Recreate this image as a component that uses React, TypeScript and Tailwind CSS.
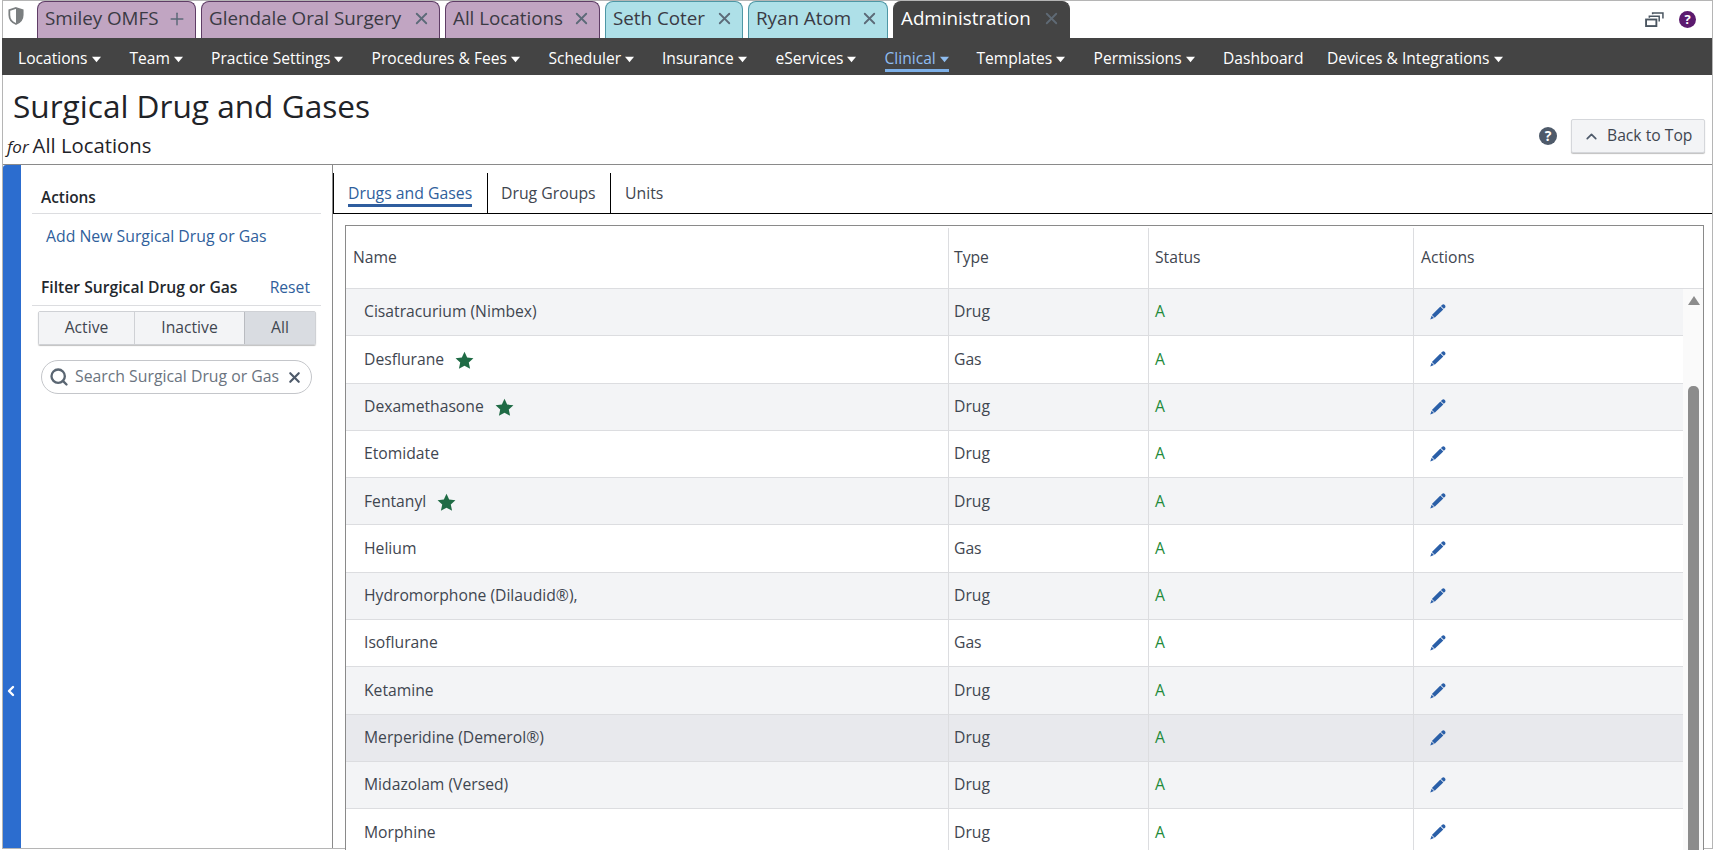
import { Plus, X, ChevronUp, ChevronLeft, Search } from 'lucide-react';

type Row = {
    name: string;
    type: string;
    star?: boolean;
    hover?: boolean;
}

const rows: Row[] = [
    { name: 'Cisatracurium (Nimbex)', type: 'Drug' },
    { name: 'Desflurane', type: 'Gas', star: true },
    { name: 'Dexamethasone', type: 'Drug', star: true },
    { name: 'Etomidate', type: 'Drug' },
    { name: 'Fentanyl', type: 'Drug', star: true },
    { name: 'Helium', type: 'Gas' },
    { name: 'Hydromorphone (Dilaudid®),', type: 'Drug' },
    { name: 'Isoflurane', type: 'Gas' },
    { name: 'Ketamine', type: 'Drug' },
    { name: 'Merperidine (Demerol®)', type: 'Drug', hover: true },
    { name: 'Midazolam (Versed)', type: 'Drug' },
    { name: 'Morphine', type: 'Drug' },
];

const navItems = [
    { label: 'Locations', caret: true, cls: 'w-[111.5px]' },
    { label: 'Team', caret: true, cls: 'w-[81.5px]' },
    { label: 'Practice Settings', caret: true, cls: 'w-[160.5px]' },
    { label: 'Procedures & Fees', caret: true, cls: 'w-[177px]' },
    { label: 'Scheduler', caret: true, cls: 'w-[113.5px]' },
    { label: 'Insurance', caret: true, cls: 'w-[113.5px]' },
    { label: 'eServices', caret: true, cls: 'w-[109px]' },
    { label: 'Clinical', caret: true, active: true, cls: 'w-[92px]' },
    { label: 'Templates', caret: true, cls: 'w-[117px]' },
    { label: 'Permissions', caret: true, cls: 'w-[129.5px]' },
    { label: 'Dashboard', cls: 'w-[104px]' },
    { label: 'Devices & Integrations', caret: true, cls: 'w-[200px]' },
];

function Pencil() {
    return (
        <svg viewBox="0 0 16 16" className="w-4 h-4 text-[#2a5fa8]" fill="currentColor">
            <path d="M12 0.9 C12.8 0.1 13.9 0.1 14.8 0.9 C15.7 1.8 15.7 2.9 15 3.7 L13.8 4.8 L10.9 1.9 Z" />
            <path d="M10.4 2.5 L13.3 5.4 L4.7 13.7 L1.9 11 Z" />
            <path d="M1.6 11.7 L4 14.1 L0.3 15.6 Z" />
        </svg>
    );
}

function Star() {
    return (
        <svg viewBox="0 0 20 20" className="w-[19px] h-[19px] ml-[11px] mt-[2px] text-[#1f6b45]" fill="currentColor">
            <path d="M10 0.8 L12.8 6.9 L19.4 7.6 L14.5 12.1 L15.9 18.7 L10 15.4 L4.1 18.7 L5.5 12.1 L0.6 7.6 L7.2 6.9 Z" />
        </svg>
    );
}

function Caret({ color }: { color: string }) {
    return (
        <svg viewBox="0 0 8 6" className={`w-[9px] h-[7px] ml-[4px] mt-[2px] ${color}`} fill="currentColor">
            <path d="M0 0.5 H8 L4 5.5 Z" />
        </svg>
    );
}

function Tab({ label, w, kind, plus }: { label: string; w: string; kind: 'purple' | 'teal' | 'dark'; plus?: boolean }) {
    const colors = kind === 'purple'
        ? 'bg-[#c1a5c2] border-[#5f3d66] text-[#3a3a44]'
        : kind === 'teal'
            ? 'bg-[#aee0e8] border-[#4e97a5] text-[#3a3a44]'
            : 'bg-[#444444] border-[#444444] text-white';
    const iconColor = kind === 'dark' ? 'text-[#5f6a75]' : 'text-[#5c6a78]';
    return (
        <div className={`flex items-center justify-between h-[37px] pl-[7px] pr-[8px] pb-[3px] rounded-t-[8px] border border-b-0 ${w} ${colors}`}>
            <span className="text-[18.8px] leading-none whitespace-nowrap">{label}</span>
            {plus
                ? <Plus size={20} strokeWidth={1.8} className={iconColor} />
                : <X size={19} strokeWidth={2.3} className={iconColor} />}
        </div>
    );
}

export default function App() {
    return (
        <div className="h-[850px] w-[1714px] overflow-hidden bg-white font-['Open_Sans',sans-serif] text-[#3f4650]">
            <div className="h-[849px] ml-[2px] mr-[1px] border-l border-r border-t border-b border-[#b5b5b5] flex flex-col">
                {/* Tabs */}
                <div className="flex items-end h-[37px] shrink-0 relative">
                    <svg viewBox="0 0 18 20" className="absolute left-[5px] top-[6px] w-[16px] h-[18px]">
                        <path d="M9 1 L16.5 3.5 V9 C16.5 14 13 17.5 9 19 C5 17.5 1.5 14 1.5 9 V3.5 Z" fill="none" stroke="#7b7f80" strokeWidth="2" />
                        <path d="M9 1 L16.5 3.5 V9 C16.5 14 13 17.5 9 19 Z" fill="#7b7f80" />
                    </svg>
                    <div className="flex gap-[5px] ml-[34px]">
                        <Tab label="Smiley OMFS" w="w-[159px]" kind="purple" plus />
                        <Tab label="Glendale Oral Surgery" w="w-[239px]" kind="purple" />
                        <Tab label="All Locations" w="w-[155px]" kind="purple" />
                        <Tab label="Seth Coter" w="w-[138px]" kind="teal" />
                        <Tab label="Ryan Atom" w="w-[140px]" kind="teal" />
                        <Tab label="Administration" w="w-[177px]" kind="dark" />
                    </div>
                    <div className="ml-auto flex items-center gap-[15px] mr-[16px] self-center">
                        <svg viewBox="0 0 20 16" className="w-[19px] h-[15px] text-[#4a5560]" fill="none" stroke="currentColor" strokeWidth="1.6">
                            <rect x="1" y="8" width="11" height="7" strokeWidth="2" />
                            <path d="M4.5 6 V4.5 H15 V10" />
                            <path d="M8 2.5 V1 H19 V7" />
                        </svg>
                        <div className="w-[17px] h-[17px] rounded-full bg-[#5b1a6e] text-white text-[13px] font-bold flex items-center justify-center leading-none">?</div>
                    </div>
                </div>

                {/* Nav */}
                <div className="flex items-center h-[37px] shrink-0 bg-[#444444] -ml-px pl-[16px] text-[15.6px] text-white">
                    {navItems.map((item) => (
                        <div key={item.label} className={`shrink-0 ${item.cls}`}>
                            <div className={`inline-flex items-center h-[23px] mt-[7px] border-b-[3px] whitespace-nowrap ${item.active ? 'border-[#7db0e8] text-[#8fbdf0]' : 'border-transparent'}`}>
                                {item.label}
                                {item.caret && <Caret color={item.active ? 'text-[#8fbdf0]' : 'text-white'} />}
                            </div>
                        </div>
                    ))}
                </div>

                {/* Title */}
                <div className="flex justify-between h-[90px] shrink-0 border-b border-[#8a8a8a] pl-[10px] pr-[7px]">
                    <div>
                        <h1 className="text-[31.6px] leading-[40px] mt-[11px] text-[#1f2328]">Surgical Drug and Gases</h1>
                        <div className="flex items-baseline mt-[7px] leading-[24px] text-[#1f2328]">
                            <span className="italic text-[17px] mr-[4px] -ml-[6px]">for</span>
                            <span className="text-[20.3px]">All Locations</span>
                        </div>
                    </div>
                    <div className="flex items-center gap-[14px] mt-[44px] self-start">
                        <div className="w-[18px] h-[18px] rounded-full bg-[#4e5a6a] text-white text-[14px] font-bold flex items-center justify-center leading-none">?</div>
                        <div className="flex items-center h-[34px] w-[134px] pl-[11px] rounded-[2px] bg-[#f3f4f6] border border-[#d5d7db] shadow-[0_1px_1px_rgba(0,0,0,0.25)] text-[15.7px] text-[#3f4650]">
                            <ChevronUp size={17} strokeWidth={2.4} className="mr-[7px] text-[#4e5a6a]" />
                            Back to Top
                        </div>
                    </div>
                </div>

                {/* Body */}
                <div className="flex flex-1 min-h-0">
                    <div className="w-[18px] shrink-0 bg-[#2c6dcf] rounded-tl-[3px] flex items-start text-white pt-[518px]">
                        <ChevronLeft size={16} strokeWidth={3.6} />
                    </div>

                    {/* Side panel */}
                    <div className="w-[312px] shrink-0 border-r border-[#8a8a8a] pl-[11px] pr-[11px]">
                        <div className="h-[49px] pt-[22px] pl-[9px] border-b border-[#dcdde0] text-[15.4px] leading-[22px] font-semibold text-[#23272d]">Actions</div>
                        <div className="pl-[14px] mt-[11px] leading-[22px] text-[15.8px] text-[#305f9c]">Add New Surgical Drug or Gas</div>
                        <div className="flex justify-between items-center mt-[25px] h-[34px] pb-[2px] pl-[9px] pr-[11px] border-b border-[#dcdde0]">
                            <span className="text-[15.7px] font-semibold text-[#23272d]">Filter Surgical Drug or Gas</span>
                            <span className="text-[15.7px] text-[#305f9c]">Reset</span>
                        </div>
                        <div className="flex h-[34px] ml-[6px] mt-[5px] w-[278px] rounded-[2px] border border-[#cfd1d5] shadow-[0_1px_1px_rgba(0,0,0,0.25)] text-[15.7px]">
                            <div className="w-[96px] flex items-center justify-center bg-[#f3f4f6] border-r border-[#cfd1d5]">Active</div>
                            <div className="w-[110px] flex items-center justify-center bg-[#f3f4f6] border-r border-[#b9bbc0]">Inactive</div>
                            <div className="flex-1 flex items-center justify-center bg-[#d9dce1]">All</div>
                        </div>
                        <div className="flex items-center h-[34px] ml-[9px] mt-[15px] w-[271px] pl-[7px] pr-[8px] rounded-full border border-[#c4c6ca] text-[15.8px] text-[#6b7480]">
                            <Search size={20} strokeWidth={2.8} className="text-[#5a6672] shrink-0" />
                            <span className="ml-[6px] whitespace-nowrap flex-1">Search Surgical Drug or Gas</span>
                            <X size={17} strokeWidth={3} className="text-[#4e5a6a] shrink-0" />
                        </div>
                    </div>

                    {/* Main */}
                    <div className="flex-1 min-w-0 pt-[8px]">
                        <div className="flex h-[41px] border-b border-black border-l text-[15.8px]">
                            <div className="w-[154px] border-r border-black pl-[14px] pt-[9px]">
                                <span className="inline-block h-[24px] leading-[21px] border-b-[3px] border-[#2f5d9e] text-[#305f9c]">Drugs and Gases</span>
                            </div>
                            <div className="w-[123px] border-r border-black pl-[13px] pt-[10px] leading-[21px]">Drug Groups</div>
                            <div className="pl-[14px] pt-[10px] leading-[21px]">Units</div>
                        </div>

                        <div className="ml-[12px] mr-[8px] mt-[11px] h-[640px] border border-[#8a8a8a] border-b-0 text-[15.7px]">
                            <div className="flex h-[63px] pt-[2px] border-b border-[#dcdde0] font-medium text-[#3f4650]">
                                <div className="w-[603px] border-r border-[#dcdde0] pl-[7px] flex items-center">Name</div>
                                <div className="w-[200px] border-r border-[#dcdde0] pl-[5px] flex items-center">Type</div>
                                <div className="w-[265px] border-r border-[#dcdde0] pl-[6px] flex items-center">Status</div>
                                <div className="flex-1 pl-[7px] flex items-center">Actions</div>
                            </div>
                            <div className="flex relative">
                                <div className="w-[1337px] shrink-0">
                                    {rows.map((row, idx) => (
                                        <div key={row.name} className={`flex h-[47.3px] border-b border-[#dcdde0] ${row.hover ? 'bg-[#e8e9ed]' : idx % 2 === 0 || idx === 10 ? 'bg-[#f3f4f6]' : 'bg-white'}`}>
                                            <div className="w-[603px] border-r border-[#dcdde0] pl-[18px] flex items-center">
                                                {row.name}
                                                {row.star && <Star />}
                                            </div>
                                            <div className="w-[200px] border-r border-[#dcdde0] pl-[5px] flex items-center">{row.type}</div>
                                            <div className="w-[265px] border-r border-[#dcdde0] pl-[6px] flex items-center text-[#1f8a3b]">A</div>
                                            <div className="flex-1 pl-[16px] flex items-center"><Pencil /></div>
                                        </div>
                                    ))}
                                </div>
                                <div className="flex-1 bg-[#fafafa] relative">
                                    <div className="absolute left-[5px] top-[7px] w-0 h-0 border-l-[6px] border-r-[6px] border-b-[9px] border-l-transparent border-r-transparent border-b-[#8c8c8c]" />
                                    <div className="absolute left-[5px] top-[97px] w-[11px] h-[500px] bg-[#8c8c8c] rounded-t-[5px]" />
                                </div>
                            </div>
                        </div>
                    </div>
                </div>
            </div>
        </div>
    );
}
